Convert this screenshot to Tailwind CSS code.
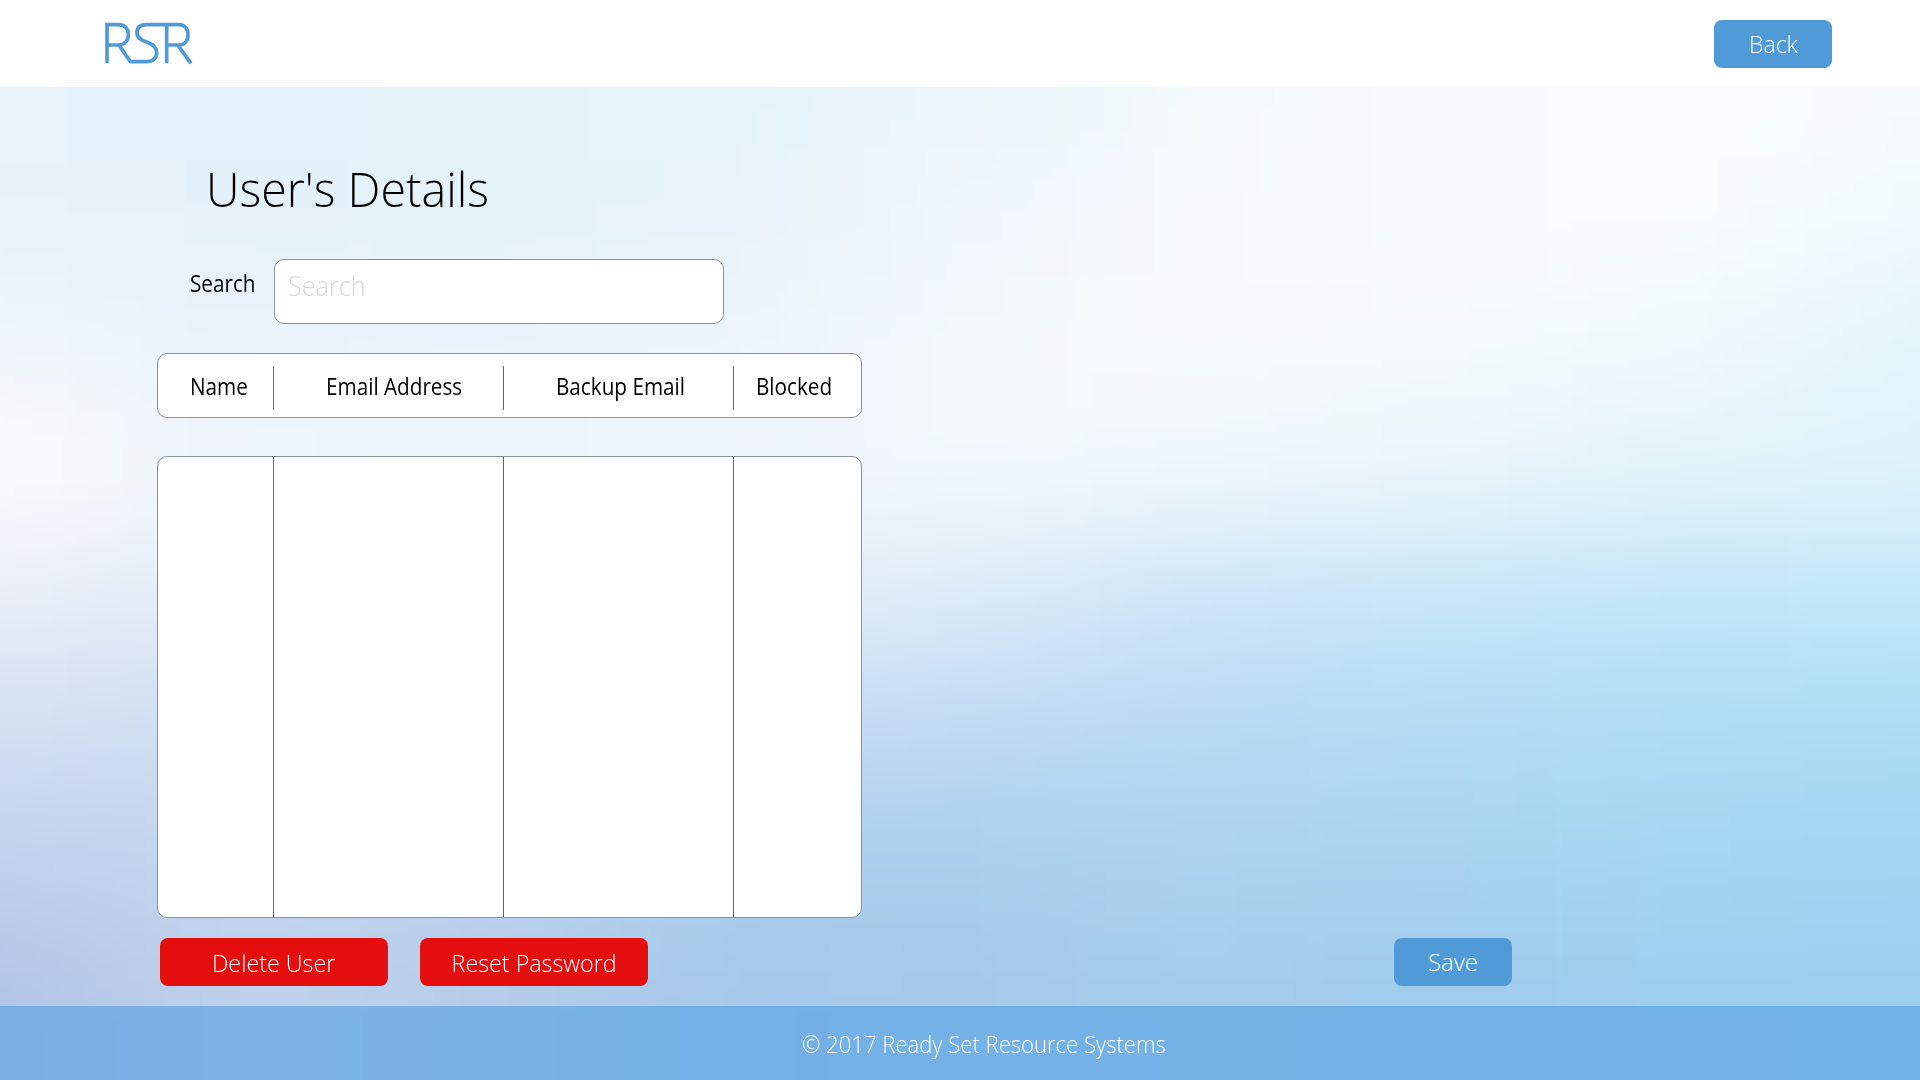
<!DOCTYPE html>
<html lang="en">
<head>
<meta charset="utf-8">
<title>User's Details</title>
<script src="https://cdn.jsdelivr.net/npm/@tailwindcss/browser@4"></script>
</head>
<body class="relative isolate flex h-[1080px] w-[1920px] flex-col overflow-hidden font-['Open_Sans','Noto_Sans',sans-serif] font-light text-black">
<svg class="absolute inset-0 -z-10" width="1920" height="1080" aria-hidden="true">
  <defs><filter id="soft" filterUnits="userSpaceOnUse" x="-400" y="-400" width="2720" height="1880" color-interpolation-filters="sRGB"><feGaussianBlur stdDeviation="90 58"/></filter></defs>
  <g id="cells" filter="url(#soft)"></g>
</svg>
<header class="flex h-[87px] shrink-0 items-start justify-between bg-white pr-22 pl-[90px]">
  <svg width="120" height="87" viewBox="0 0 360 261" fill="none" stroke="#509bd7" stroke-width="11" aria-label="RSR">
    <path d="M51 190V74H84C104 74 115 86 115 104S104 135 84 135H51M87 135L121 185H170C190 185 200 174 200 158C200 142 191 134 172 127C152 120 141 113 141 98C141 83 151 74 170 74H266C284 74 294 86 294 104S284 135 266 135H230M230 74V190M263 135L303 190"/>
  </svg>
  <button class="mt-5 h-12 w-[118px] rounded-lg bg-[#509bd7] text-2xl text-white"><span class="inline-block scale-x-96">Back</span></button>
</header>
<main class="flex grow flex-col pl-[157px]">
  <h1 class="mt-[69px] pl-[49px] text-5xl leading-[66px]"><span class="inline-block origin-left scale-x-97">User's Details</span></h1>
  <form class="mt-[37px] flex">
    <label class="w-[117px] pt-[7px] pl-[33px] text-[23px] leading-[34px] font-normal"><span class="inline-block origin-left scale-x-90">Search</span></label>
    <div class="h-[65px] w-[450px] rounded-[10px] border border-[#8d9297] bg-white pt-[5px] pl-[13px] text-[28px] leading-10 text-[#d8d8d8]"><span class="inline-block origin-left scale-x-90">Search</span></div>
  </form>
  <div class="mt-[29px] grid h-[65px] w-[705px] grid-cols-[116px_230px_230px_1fr] items-start rounded-[10px] border border-[#8d9297] bg-white pt-3 text-[23px] font-normal">
    <div class="flex h-11 items-center border-r border-[#666] pb-[3px] pl-8"><span class="origin-left scale-x-90">Name</span></div>
    <div class="flex h-11 items-center border-r border-[#666] pb-[3px] pl-[52px]"><span class="origin-left scale-x-90">Email Address</span></div>
    <div class="flex h-11 items-center border-r border-[#666] pb-[3px] pl-[52px]"><span class="origin-left scale-x-90">Backup Email</span></div>
    <div class="flex h-11 items-center pb-[3px] pl-[22px]"><span class="origin-left scale-x-90">Blocked</span></div>
  </div>
  <div class="mt-[38px] grid h-[462px] w-[705px] grid-cols-[116px_230px_230px_1fr] rounded-[10px] border border-[#8d9297] bg-white">
    <div class="border-r border-[#666]"></div><div class="border-r border-[#666]"></div><div class="border-r border-[#666]"></div>
  </div>
  <div class="mt-5 flex pl-[3px] text-2xl text-white">
    <button class="h-12 w-[228px] rounded-lg bg-[#e50e0e] pt-0.5"><span class="inline-block scale-x-97">Delete User</span></button>
    <button class="ml-8 h-12 w-[228px] rounded-lg bg-[#e50e0e] pt-0.5"><span class="inline-block scale-x-97">Reset Password</span></button>
    <button class="ml-[746px] h-12 w-[118px] rounded-lg bg-[#509bd7]">Save</button>
  </div>
</main>
<footer class="flex h-[74px] shrink-0 bg-[#5fa6e4]/70 pt-[22px] pl-[802px] text-2xl text-white"><span class="origin-left scale-x-92">© 2017 Ready Set Resource Systems</span></footer>
<script>
  // Soft colour field: one row of swatches per band, blurred together.
  const rows = [
    'e7f2fb e5f2fb e5f2fa e6f3fb eaf5fb f3f9fc f8fbfd f9fcfd f7fbfe',
    'e7f1fa e5f1fa e4f2fa e7f2fa f0f6fc f5f9fd f8fbfd f9fcfd f0f9fd',
    'f0f5fb eaf3fb ebf3fb edf4fb f3f8fc f5f9fc f4f9fc f0f8fc e2f4fc',
    'fafbfd f0f6fb eef5fb eff6fb f3f8fc f0f7fc ebf5fb e2f3fa dff3fb',
    'e8ecf7 e1eaf6 e0eaf6 e4eef8 dbe9f7 c9e3f6 c3e5f6 bfe5f7 bee6f6',
    'd2def1 cbdcf0 c9dbf1 c3daf2 bcd9f1 b7d9f2 b3daf3 aedbf3 abdbf3',
    'c1d0eb c4d4ed bdd3ee aacdec aaceec abd2ee a8d2ef a3d5f2 a0d5f2',
    'b1c3e6 bed1eb b5cce9 a7c7ea a5c8ea a4cbeb a0cbeb 9dceee 9ccfee'
  ].map(r => r.split(' '));
  let out = '';
  rows.forEach((r, i) => r.forEach((c, j) => {
    const x = j === 0 ? -400 : j * 240 - 120, y = i === 0 ? -400 : 22 + i * 130;
    const w = (j === 8 ? 2320 : j * 240 + 121) - x, h = (i === 7 ? 1480 : 153 + i * 130) - y;
    out += `<rect x="${x}" y="${y}" width="${w}" height="${h}" fill="#${c}"/>`;
  }));
  document.getElementById('cells').innerHTML = out;
</script>
</body>
</html>
